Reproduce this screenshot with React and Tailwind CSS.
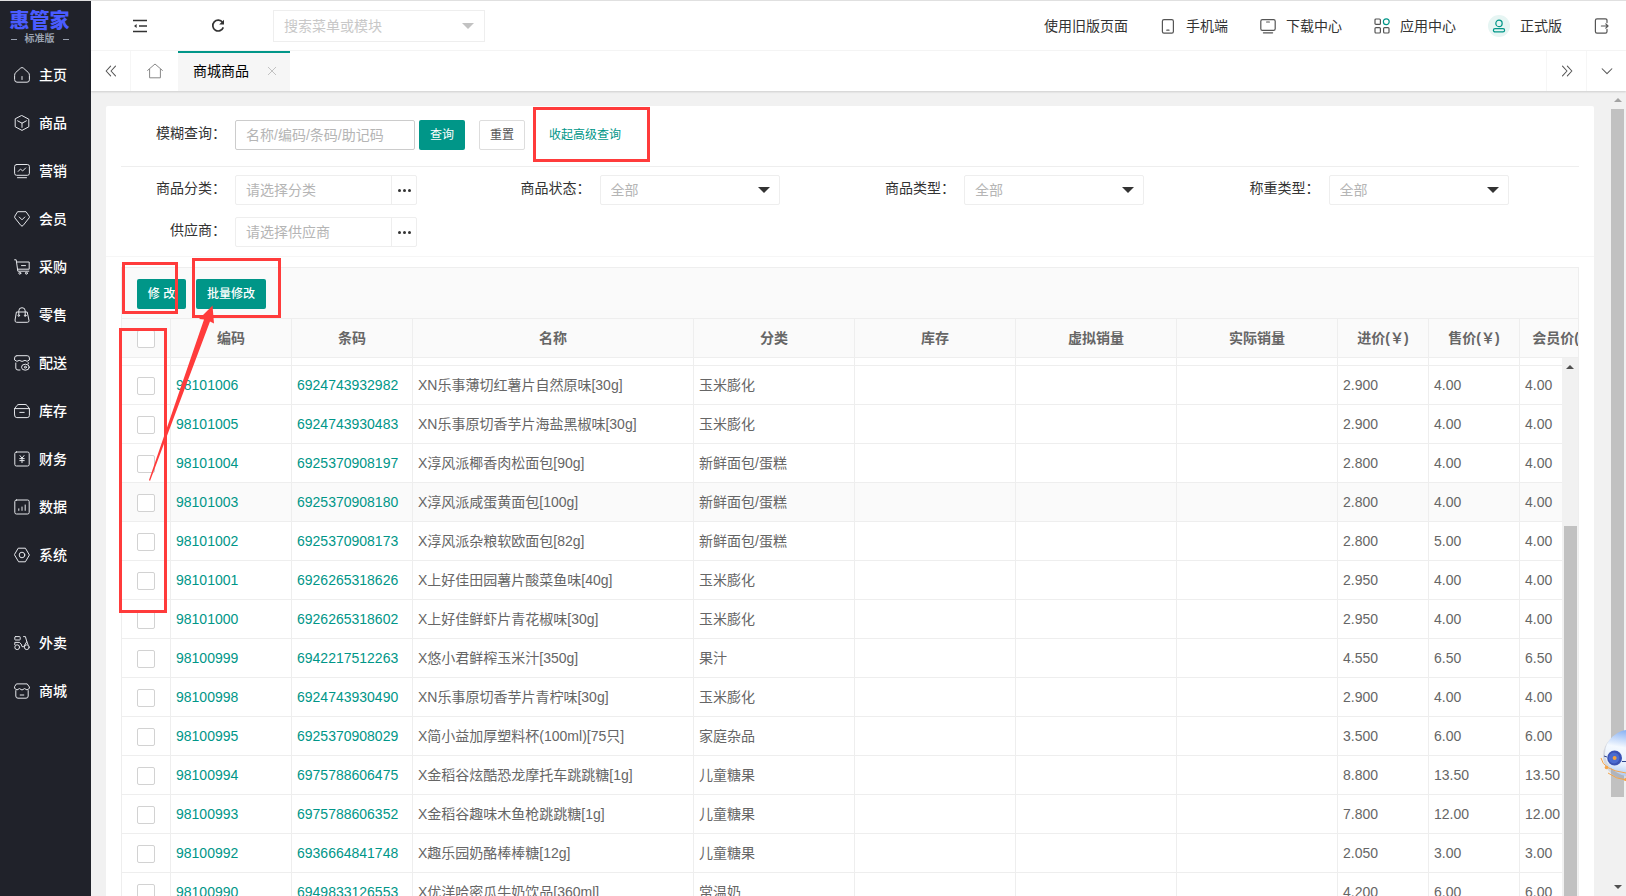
const cjk = "font-['Liberation_Sans','Noto_Sans_CJK_SC',sans-serif]";

const Icon = ({ children, size = 16, className = '' }) => (
  <svg
    width={size}
    height={size}
    viewBox="0 0 16 16"
    fill="none"
    stroke="currentColor"
    strokeWidth="1"
    strokeLinecap="round"
    strokeLinejoin="round"
    className={`shrink-0 ${className}`}
    aria-hidden="true"
  >
    {children}
  </svg>
);

const menuIcons = {
  home: (
    <>
      <path d="M.6 8.3 Q.6 6.6 1.6 5.6 L6.6 1.1 Q8 0 9.4 1.1 L14.4 5.6 Q15.4 6.6 15.4 8.3 V12.8 Q15.4 15.2 13 15.2 H3 Q.6 15.2 .6 12.8 Z" />
      <path d="M8 9.5 V12.5" />
    </>
  ),
  goods: (
    <>
      <path d="M8 .6 L14.8 4.2 V11.8 L8 15.4 L1.2 11.8 V4.2 Z" />
      <path d="M3.6 5.8 L8 8.2 L12.4 5.8 M8 8.2 V12.4" />
    </>
  ),
  marketing: (
    <>
      <rect x=".6" y="1.5" width="14.8" height="10.8" rx="2" />
      <path d="M4.2 8.4 L6.5 6 L8.6 8 L11.6 5 M3.5 14.7 H12.5" />
    </>
  ),
  member: (
    <>
      <path d="M4 .7 H12 L15.3 5.4 Q15.6 6 15.2 6.8 L9 14.6 Q8 15.6 7 14.6 L.8 6.8 Q.4 6 .7 5.4 Z" />
      <path d="M5.2 6 L8 8.8 L10.8 6" />
    </>
  ),
  purchase: (
    <>
      <path d="M.6 .8 H2.2 L3.8 12.2 H14.8 M2.8 3 H15.2 V10.2 H3.6 M7.5 6.6 H11.5" />
      <circle cx="5.8" cy="14.2" r="1" />
      <circle cx="12.4" cy="14.2" r="1" />
    </>
  ),
  retail: (
    <>
      <path d="M2.8 5 H13.2 L15 13.4 Q15.2 15.3 13.4 15.3 H2.6 Q.8 15.3 1 13.4 Z" />
      <path d="M4.8 8 V3.8 Q4.8 .7 8 .7 Q11.2 .7 11.2 3.8 V8" />
      <circle cx="4.8" cy="8.6" r=".8" />
      <circle cx="11.2" cy="8.6" r=".8" />
    </>
  ),
  delivery: (
    <>
      <path d="M1.8 8 V13 Q1.8 15 4 15 H6 M2.8 .7 H13.2 Q15.4 .7 15.4 3 V5 Q13 7.4 11 5.4 Q8 7.4 5.2 5.4 Q3 7.4 .6 5 V3 Q.6 .7 2.8 .7 M14.2 7.6 V8.8" />
      <ellipse cx="11.4" cy="12.2" rx="3.9" ry="3" />
      <circle cx="11.4" cy="12.2" r="1" />
    </>
  ),
  stock: (
    <>
      <path d="M.6 5.6 L3 2.4 Q3.6 1.5 5 1.5 H11 Q12.4 1.5 13 2.4 L15.4 5.6 V12.4 Q15.4 14.6 13.2 14.6 H2.8 Q.6 14.6 .6 12.4 Z" />
      <path d="M.6 5.6 H15.4 M5.8 9.4 H10.2" />
    </>
  ),
  finance: (
    <>
      <rect x=".8" y="1" width="14.4" height="14" rx="1.6" />
      <path d="M6 4.6 L8 7.2 L10 4.6 M8 7.2 V11.6 M5.8 7.6 H10.2 M5.8 9.6 H10.2" />
    </>
  ),
  data: (
    <>
      <rect x=".8" y="1" width="14.4" height="14" rx="1.6" />
      <path d="M4.8 9.8 V11.4 M8 8 V11.4 M11.2 6 V11.4" />
    </>
  ),
  system: (
    <>
      <path d="M4.6 1.2 H11.4 L15.4 8 L11.4 14.8 H4.6 L.6 8 Z" />
      <circle cx="8" cy="8" r="2.8" />
    </>
  ),
  takeout: (
    <>
      <rect x=".8" y="1.6" width="5.4" height="3.4" rx=".6" />
      <path d="M.8 9.6 V7.4 H5.4 Q7.6 8.6 8 11.6 L9.6 11.8 L12.8 6.6 L11.4 1.6 H9.6 M12.8 6.6 L14 9.4" />
      <circle cx="3.2" cy="12.2" r="2.4" />
      <circle cx="12.8" cy="12.2" r="2.4" />
    </>
  ),
  mall: (
    <>
      <path d="M1.8 7.6 V13 Q1.8 15.2 4 15.2 H12 Q14.2 15.2 14.2 13 V7.6 M6.2 12 H9.8" />
      <path d="M2.8 .9 H13.2 L15.4 4 V5.4 Q13 8.4 10.6 5.6 Q8 8.4 5.4 5.6 Q3 8.4 .6 5.4 V4 Z" />
    </>
  ),
};

const mainMenu = [
  ['home', '主页'],
  ['goods', '商品'],
  ['marketing', '营销'],
  ['member', '会员'],
  ['purchase', '采购'],
  ['retail', '零售'],
  ['delivery', '配送'],
  ['stock', '库存'],
  ['finance', '财务'],
  ['data', '数据'],
  ['system', '系统'],
];

const extraMenu = [
  ['takeout', '外卖'],
  ['mall', '商城'],
];

const MenuList = ({ items }) => (
  <ul>
    {items.map(([icon, label]) => (
      <li key={icon}>
        <a href="#" className="flex h-12 items-center gap-[9px] pl-3.5 text-sm font-medium text-white">
          <Icon className="text-gray-200">{menuIcons[icon]}</Icon>
          {label}
        </a>
      </li>
    ))}
  </ul>
);

const Sidebar = () => (
  <aside className="w-[91px] shrink-0 bg-[#20222a]">
    <div className="flex h-[50px] flex-col items-center pr-3 pt-2">
      <span className="text-xl font-black leading-6 text-[#4a5cff]">惠管家</span>
      <span className="flex items-center gap-2 text-[10px] font-bold leading-3 text-gray-400">
        <i className="h-px w-1.5 bg-gray-400" />
        标准版
        <i className="h-px w-1.5 bg-gray-400" />
      </span>
    </div>
    <nav className="flex flex-col gap-10">
      <MenuList items={mainMenu} />
      <MenuList items={extraMenu} />
    </nav>
  </aside>
);

const Header = () => (
  <header className="flex h-[50px] items-center justify-between border-b border-[#f6f6f6] bg-white pl-[42px] pr-4 text-sm text-[#333]">
    <div className="flex items-center">
      <button type="button" aria-label="收起菜单">
        <svg width="14" height="14" viewBox="0 0 14 14" fill="none" stroke="#333" strokeWidth="1.5">
          <path d="M0 1.5 H14 M6 7 H14 M0 12.5 H14" />
          <path d="M3.6 5 V9 L1 7 Z" fill="#333" stroke="none" />
        </svg>
      </button>
      <button type="button" aria-label="刷新" className="ml-16">
        <svg width="14" height="14" viewBox="0 0 14 14" fill="none" stroke="#333" strokeWidth="1.7">
          <path d="M11.6 3.4 A5.4 5.4 0 1 0 12.3 8.4" />
          <path d="M13 .8 V5.4 H8.2 Z" fill="#333" stroke="none" />
        </svg>
      </button>
      <div className="ml-12 flex h-8 w-[212px] items-center border border-[#eee] px-2.5">
        <input
          aria-label="搜索菜单或模块"
          placeholder="搜索菜单或模块"
          className="min-w-0 flex-1 outline-none placeholder:text-[#c8c8c8]"
        />
        <i className="border-x-6 border-t-6 border-x-transparent border-t-[#c2c2c2]" />
      </div>
    </div>
    <nav className="flex items-center">
      <a href="#">使用旧版页面</a>
      <a href="#" className="ml-8 flex items-center gap-2.5">
        <Icon className="text-[#555]">
          <rect x="2.4" y="1.6" width="11" height="13.6" rx="1.6" strokeWidth="1.2" />
          <path d="M6.8 12.2 H9" strokeWidth="1.2" />
        </Icon>
        手机端
      </a>
      <a href="#" className="ml-8 flex items-center gap-2.5">
        <Icon className="text-[#555]">
          <rect x=".8" y="1.6" width="14.4" height="10.8" rx="1.6" strokeWidth="1.2" />
          <path d="M6.6 4 H9.4 M3.4 14.8 H12.6" strokeWidth="1.2" />
        </Icon>
        下载中心
      </a>
      <a href="#" className="ml-8 flex items-center gap-2.5">
        <Icon className="text-[#555]">
          <g strokeWidth="1.2">
            <rect x="1" y="1" width="5.4" height="5.4" rx="1" />
            <rect x="1" y="9.6" width="5.4" height="5.4" rx="1" />
            <rect x="9.6" y="9.6" width="5.4" height="5.4" rx="1" />
            <circle cx="12.3" cy="3.7" r="2.9" stroke="#009688" />
          </g>
        </Icon>
        应用中心
      </a>
      <a href="#" className="ml-8 flex items-center gap-2.5">
        <span className="flex size-[22px] items-center justify-center rounded-full bg-[#e6f5f3] text-[#009688]">
          <Icon size={14}>
            <circle cx="8" cy="5" r="3.6" strokeWidth="1.4" />
            <rect x="1.6" y="11" width="12.8" height="3.8" rx="1.9" strokeWidth="1.4" />
          </Icon>
        </span>
        正式版
      </a>
      <button type="button" aria-label="退出" className="ml-8">
        <Icon className="text-[#555]">
          <path d="M13 4.6 V2.4 Q13 .8 11.4 .8 H3 Q1.4 .8 1.4 2.4 V13.6 Q1.4 15.2 3 15.2 H11.4 Q13 15.2 13 13.6 V11.4" strokeWidth="1.2" />
          <path d="M7.4 8 H14 M11.8 5.8 L14 8 L11.8 10.2" strokeWidth="1.2" />
        </Icon>
      </button>
    </nav>
  </header>
);

const TabBar = () => (
  <div className="z-10 flex h-10 shrink-0 bg-white text-[#555] shadow-[0_1px_2px_rgba(0,0,0,0.15)]">
    <button type="button" aria-label="向左" className="flex w-10 items-center justify-center border-r border-[#f6f6f6]">
      <Icon size={12}>
        <path d="M7.5 1.5 L1.5 8 L7.5 14.5 M14 1.5 L8 8 L14 14.5" strokeWidth="1.4" />
      </Icon>
    </button>
    <button type="button" aria-label="首页" className="flex w-[47px] items-center justify-center">
      <Icon className="text-[#888]">
        <path d="M.6 7.4 L8 1 L15.4 7.4 M2.6 6.4 V14.8 H13.4 V6.4" />
      </Icon>
    </button>
    <div className="flex w-28 items-center gap-[18px] border-t-2 border-[#009688] bg-[#f6f6f6] pb-0.5 pl-[15px] text-sm text-black">
      商城商品
      <button type="button" aria-label="关闭" className="text-[#c2c2c2]">
        <Icon size={10}>
          <path d="M2 2 L14 14 M14 2 L2 14" strokeWidth="1.6" />
        </Icon>
      </button>
    </div>
    <button type="button" aria-label="向右" className="ml-auto flex w-10 items-center justify-center border-l border-[#f6f6f6]">
      <Icon size={12}>
        <path d="M2 1.5 L8 8 L2 14.5 M8.5 1.5 L14.5 8 L8.5 14.5" strokeWidth="1.4" />
      </Icon>
    </button>
    <button type="button" aria-label="更多" className="flex w-10 items-center justify-center border-l border-[#f6f6f6]">
      <Icon size={12}>
        <path d="M1.5 5 L8 11.5 L14.5 5" strokeWidth="1.4" />
      </Icon>
    </button>
  </div>
);

const Label = ({ id, children }) => (
  <label htmlFor={id} className="w-[105px] shrink-0 pb-1 text-right text-sm text-[#333]">
    {children}
  </label>
);

const PickerField = ({ id, label, placeholder }) => (
  <div className="flex items-center gap-[9px]">
    <Label id={id}>{label}</Label>
    <div className="flex h-[30px] w-[182px] rounded-xs border border-[#eee]">
      <input
        id={id}
        placeholder={placeholder}
        className="min-w-0 flex-1 pl-2.5 text-sm outline-none placeholder:text-[#b5b5b5]"
      />
      <button type="button" aria-label={placeholder} className="flex w-[25px] items-center justify-center gap-0.5 border-l border-[#eee]">
        <i className="size-[3px] rounded-full bg-[#333]" />
        <i className="size-[3px] rounded-full bg-[#333]" />
        <i className="size-[3px] rounded-full bg-[#333]" />
      </button>
    </div>
  </div>
);

const SelectField = ({ id, label }) => (
  <div className="flex items-center gap-[9px]">
    <Label id={id}>{label}</Label>
    <div className="flex h-[30px] w-[180px] items-center rounded-xs border border-[#eee] pr-[9px]">
      <select id={id} className="h-full min-w-0 flex-1 appearance-none pl-2.5 text-sm text-[#b5b5b5] outline-none">
        <option>全部</option>
      </select>
      <i className="border-x-6 border-t-6 border-x-transparent border-t-[#333]" />
    </div>
  </div>
);

const SearchForm = () => (
  <form className="border-b border-[#f6f6f6] px-[15px] pb-[9px]">
    <div className="flex h-[61px] items-center border-b border-[#eee] pb-0.5">
      <div className="flex items-center gap-[9px]">
        <Label id="keyword">模糊查询：</Label>
        <input
          id="keyword"
          placeholder="名称/编码/条码/助记码"
          className="h-[30px] w-[180px] rounded-xs border border-[#ccc] pl-2.5 text-sm outline-none placeholder:text-[#b5b5b5]"
        />
      </div>
      <button type="button" className="ml-1 h-[30px] w-[46px] rounded-xs bg-[#009688] text-xs text-white">查询</button>
      <button type="button" className="ml-3.5 h-[30px] w-[46px] rounded-xs border border-[#ddd] text-xs text-[#555]">重置</button>
      <a href="#" className="ml-6 text-xs text-[#009688]">收起高级查询</a>
    </div>
    <div className="grid grid-cols-4 gap-y-3 pt-2">
      <PickerField id="category" label="商品分类：" placeholder="请选择分类" />
      <SelectField id="status" label="商品状态：" />
      <SelectField id="type" label="商品类型：" />
      <SelectField id="weigh" label="称重类型：" />
      <PickerField id="supplier" label="供应商：" placeholder="请选择供应商" />
    </div>
  </form>
);

const rows = [
  ['98101006', '6924743932982', 'XN乐事薄切红薯片自然原味[30g]', '玉米膨化', '2.900', '4.00', '4.00'],
  ['98101005', '6924743930483', 'XN乐事原切香芋片海盐黑椒味[30g]', '玉米膨化', '2.900', '4.00', '4.00'],
  ['98101004', '6925370908197', 'X淳风派椰香肉松面包[90g]', '新鲜面包/蛋糕', '2.800', '4.00', '4.00'],
  ['98101003', '6925370908180', 'X淳风派咸蛋黄面包[100g]', '新鲜面包/蛋糕', '2.800', '4.00', '4.00'],
  ['98101002', '6925370908173', 'X淳风派杂粮软欧面包[82g]', '新鲜面包/蛋糕', '2.800', '5.00', '4.00'],
  ['98101001', '6926265318626', 'X上好佳田园薯片酸菜鱼味[40g]', '玉米膨化', '2.950', '4.00', '4.00'],
  ['98101000', '6926265318602', 'X上好佳鲜虾片青花椒味[30g]', '玉米膨化', '2.950', '4.00', '4.00'],
  ['98100999', '6942217512263', 'X悠小君鲜榨玉米汁[350g]', '果汁', '4.550', '6.50', '6.50'],
  ['98100998', '6924743930490', 'XN乐事原切香芋片青柠味[30g]', '玉米膨化', '2.900', '4.00', '4.00'],
  ['98100995', '6925370908029', 'X简小益加厚塑料杯(100ml)[75只]', '家庭杂品', '3.500', '6.00', '6.00'],
  ['98100994', '6975788606475', 'X金稻谷炫酷恐龙摩托车跳跳糖[1g]', '儿童糖果', '8.800', '13.50', '13.50'],
  ['98100993', '6975788606352', 'X金稻谷趣味木鱼枪跳跳糖[1g]', '儿童糖果', '7.800', '12.00', '12.00'],
  ['98100992', '6936664841748', 'X趣乐园奶酪棒棒糖[12g]', '儿童糖果', '2.050', '3.00', '3.00'],
  ['98100990', '6949833126553', 'X优洋哈密瓜牛奶饮品[360ml]', '常温奶', '4.200', '6.00', '6.00'],
];

const headings = ['编码', '条码', '名称', '分类', '库存', '虚拟销量', '实际销量', '进价(￥)', '售价(￥)', '会员价(￥)'];

const Columns = () => (
  <colgroup>
    <col className="w-[49px]" />
    <col className="w-[121px]" />
    <col className="w-[121px]" />
    <col className="w-[281px]" />
    <col className="w-[161px]" />
    <col className="w-[161px]" />
    <col className="w-[161px]" />
    <col className="w-[161px]" />
    <col className="w-[91px]" />
    <col className="w-[91px]" />
    <col className="w-[91px]" />
  </colgroup>
);

const Checkbox = ({ label }) => (
  <input
    type="checkbox"
    aria-label={label}
    className="mx-auto block size-[18px] appearance-none rounded-xs border border-[#d2d2d2] bg-white checked:bg-[#009688]"
  />
);

const cell = 'border-b border-r border-[#eee]';

const GoodsTable = () => (
  <div className="overflow-hidden border border-b-0 border-[#eee] text-sm text-[#666]">
    <div className="flex h-[51px] items-center gap-2.5 border-b border-[#eee] bg-[#fafafa] pl-[15px] pt-px">
      <button type="button" className="h-[30px] w-[49px] rounded-xs bg-[#009688] text-xs font-medium text-white">修 改</button>
      <button type="button" className="h-[30px] w-[70px] rounded-xs bg-[#009688] text-xs font-medium text-white">批量修改</button>
    </div>
    <div className="overflow-hidden border-b border-[#eee] bg-[#fafafa]">
      <table className="w-[1489px] table-fixed border-separate border-spacing-0">
        <Columns />
        <thead>
          <tr className="h-[38px]">
            <th className="border-r border-[#eee] pt-0.5"><Checkbox label="全选" /></th>
            {headings.map((heading) => (
              <th key={heading} className="border-r border-[#eee] font-bold">{heading}</th>
            ))}
          </tr>
        </thead>
      </table>
    </div>
    <div className="flex">
      <div className="min-w-0 flex-1 overflow-hidden">
        <table className="w-[1489px] table-fixed border-separate border-spacing-0">
          <Columns />
          <tbody>
            <tr className="h-2">
              <td className={cell} />
              {headings.map((heading) => <td key={heading} className={cell} />)}
            </tr>
            {rows.map(([code, barcode, name, category, cost, price, memberPrice]) => (
              <tr key={code} className={code === '98101003' ? 'h-[39px] bg-[#fafafa]' : 'h-[39px]'}>
                <td className={`${cell} pt-0.5`}><Checkbox label={code} /></td>
                <td className={`${cell} pl-[5px]`}><a href="#" className="text-[#009688]">{code}</a></td>
                <td className={`${cell} pl-[5px]`}><a href="#" className="text-[#009688]">{barcode}</a></td>
                <td className={`${cell} pl-[5px]`}>{name}</td>
                <td className={`${cell} pl-[5px]`}>{category}</td>
                <td className={cell} />
                <td className={cell} />
                <td className={cell} />
                <td className={`${cell} pl-[5px]`}>{cost}</td>
                <td className={`${cell} pl-[5px]`}>{price}</td>
                <td className={`${cell} pl-[5px]`}>{memberPrice}</td>
              </tr>
            ))}
          </tbody>
        </table>
      </div>
      <div className="flex w-4 shrink-0 flex-col items-center bg-[#f1f1f1]">
        <i className="mt-[7px] border-x-4 border-b-4 border-x-transparent border-b-[#505050]" />
        <i className="mt-[157px] w-[13px] flex-1 bg-[#c1c1c1]" />
      </div>
    </div>
  </div>
);

const PageScrollbar = () => (
  <div className="flex w-[17px] shrink-0 flex-col items-center bg-[#f1f1f1]">
    <i className="my-[7px] border-x-4 border-b-4 border-x-transparent border-b-[#a3a3a3]" />
    <i className="w-[13px] flex-[17] bg-[#c1c1c1]" />
    <i className="flex-[2]" />
    <i className="my-[7px] border-x-4 border-t-4 border-x-transparent border-t-[#505050]" />
  </div>
);

const Annotations = () => (
  <div className="pointer-events-none absolute inset-x-0 -top-px bottom-0 z-20 overflow-hidden">
    <div className="absolute left-[533px] top-[107px] h-[55px] w-[117px] border-3 border-[#ff3b3b]" />
    <div className="absolute left-[122px] top-[262px] h-[52px] w-14 border-3 border-[#ff3b3b]" />
    <div className="absolute left-48 top-[258px] h-15 w-[89px] border-3 border-[#ff3b3b]" />
    <div className="absolute left-[119px] top-[328px] h-[285px] w-12 border-3 border-[#ff3b3b]" />
    <svg className="absolute left-[140px] top-[300px]" width="80" height="190" viewBox="140 300 80 190">
      <path d="M212.5 305.5 L214 323.5 L210 321.5 L150 481 L149 480 L204 319.5 L199 319 Z" fill="#ff3b3b" />
    </svg>
  </div>
);

const Assistant = () => (
  <button type="button" aria-label="在线客服" className="absolute bottom-[100px] right-0 z-20">
    <svg width="30" height="76" viewBox="1596 720 30 76" fill="none">
      <defs>
        <linearGradient id="head" x1=".5" y1="0" x2=".3" y2="1">
          <stop offset="0" stopColor="#7fabf2" />
          <stop offset=".4" stopColor="#f4f9ff" />
          <stop offset=".75" stopColor="#e6f0fd" />
          <stop offset="1" stopColor="#a9c6f0" />
        </linearGradient>
      </defs>
      <ellipse cx="1629" cy="756" rx="26" ry="24" fill="#8090b0" opacity=".25" />
      <ellipse cx="1631" cy="753" rx="26" ry="23.5" fill="url(#head)" />
      <circle cx="1614.6" cy="758" r="7.4" fill="#3a52b4" />
      <circle cx="1614" cy="758" r="5.4" fill="#4a6bd0" />
      <circle cx="1614.6" cy="758" r="2" fill="#f7a23b" />
      <path d="M1604 756 L1607 757 M1622 761.5 H1626" stroke="#31478f" />
      <path d="M1601 758 Q1603 770 1626 773 M1608 773 Q1616 779 1626 780" stroke="#f5a54a" />
      <circle cx="1606.5" cy="767.5" r="1.8" fill="#f5a54a" />
      <circle cx="1625.5" cy="779.5" r="1.5" fill="#f5a54a" />
    </svg>
  </button>
);

export default function App() {
  return (
    <div className={`relative flex h-screen overflow-hidden border-t border-[#e0e0e0] bg-[#f1f1f1] ${cjk}`}>
      <Sidebar />
      <div className="flex min-w-0 flex-1 flex-col">
        <Header />
        <TabBar />
        <div className="flex min-h-0 flex-1">
          <main className="min-w-0 flex-1 overflow-hidden p-[15px]">
            <div className="rounded-xs bg-white">
              <SearchForm />
              <div className="px-[15px] pt-2.5">
                <GoodsTable />
              </div>
            </div>
          </main>
          <PageScrollbar />
        </div>
      </div>
      <Annotations />
      <Assistant />
    </div>
  );
}
